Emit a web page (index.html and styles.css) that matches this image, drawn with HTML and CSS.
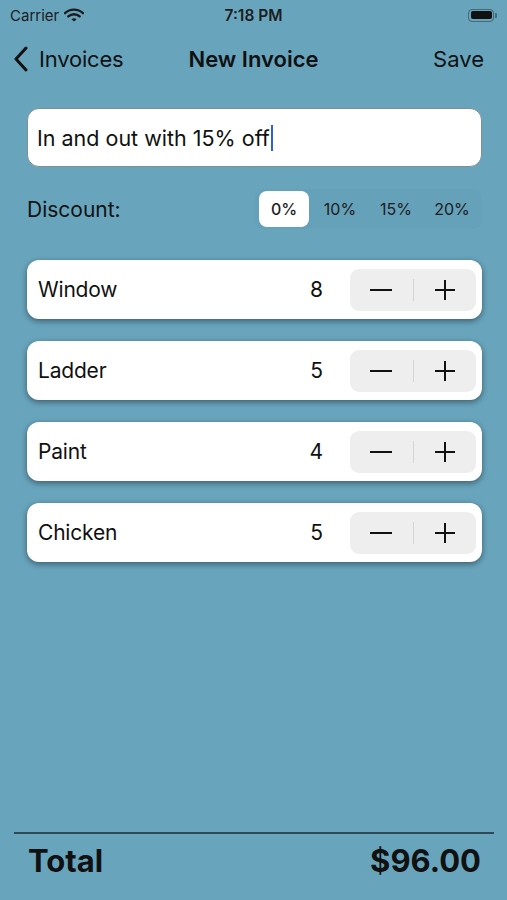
FILE: index.html
```html
<!DOCTYPE html>
<html>
<head>
<meta charset="utf-8">
<link rel="stylesheet" href="styles.css">
</head>
<body>
<div class="screen">
  <div class="status">
    <div class="status-left">
      <span class="carrier">Carrier</span>
      <svg class="wifi" width="20" height="14" viewBox="0 0 20 14">
        <path d="M1 5.2 A13 13 0 0 1 19 5.2" fill="none" stroke="#1c1c1e" stroke-width="2.4" stroke-linecap="round"/>
        <path d="M4.3 8.4 A8.5 8.5 0 0 1 15.7 8.4" fill="none" stroke="#1c1c1e" stroke-width="2.4" stroke-linecap="round"/>
        <path d="M7.4 11.3 L10 13.6 L12.6 11.3 A4 4 0 0 0 7.4 11.3 Z" fill="#1c1c1e"/>
      </svg>
    </div>
    <div class="time">7:18 PM</div>
    <div class="status-right">
      <div class="battery"><div class="battery-fill"></div></div>
      <div class="battery-cap"></div>
    </div>
  </div>

  <div class="nav">
    <div class="nav-back">
      <svg width="16" height="26" viewBox="0 0 16 26">
        <path d="M13 2 L3 13 L13 24" fill="none" stroke="#111" stroke-width="3" stroke-linecap="round" stroke-linejoin="round"/>
      </svg>
      <span>Invoices</span>
    </div>
    <div class="nav-title">New Invoice</div>
    <div class="nav-save">Save</div>
  </div>

  <div class="content">
    <div class="field"><span>In and out with 15% off</span><span class="caret"></span></div>

    <div class="discount">
      <span class="discount-label">Discount:</span>
      <div class="segmented">
        <div class="seg selected">0%</div>
        <div class="seg">10%</div>
        <div class="seg">15%</div>
        <div class="seg">20%</div>
      </div>
    </div>

    <div class="items">
      <div class="card">
        <span class="name">Window</span>
        <span class="qty">8</span>
        <div class="stepper">
          <div class="step"><svg width="24" height="24" viewBox="0 0 24 24"><path d="M1 12 H23" stroke="#111" stroke-width="2"/></svg></div>
          <div class="sep"></div>
          <div class="step"><svg width="24" height="24" viewBox="0 0 24 24"><path d="M2 12 H22 M12 2 V22" stroke="#111" stroke-width="2"/></svg></div>
        </div>
      </div>
      <div class="card">
        <span class="name">Ladder</span>
        <span class="qty">5</span>
        <div class="stepper">
          <div class="step"><svg width="24" height="24" viewBox="0 0 24 24"><path d="M1 12 H23" stroke="#111" stroke-width="2"/></svg></div>
          <div class="sep"></div>
          <div class="step"><svg width="24" height="24" viewBox="0 0 24 24"><path d="M2 12 H22 M12 2 V22" stroke="#111" stroke-width="2"/></svg></div>
        </div>
      </div>
      <div class="card">
        <span class="name">Paint</span>
        <span class="qty">4</span>
        <div class="stepper">
          <div class="step"><svg width="24" height="24" viewBox="0 0 24 24"><path d="M1 12 H23" stroke="#111" stroke-width="2"/></svg></div>
          <div class="sep"></div>
          <div class="step"><svg width="24" height="24" viewBox="0 0 24 24"><path d="M2 12 H22 M12 2 V22" stroke="#111" stroke-width="2"/></svg></div>
        </div>
      </div>
      <div class="card">
        <span class="name">Chicken</span>
        <span class="qty">5</span>
        <div class="stepper">
          <div class="step"><svg width="24" height="24" viewBox="0 0 24 24"><path d="M1 12 H23" stroke="#111" stroke-width="2"/></svg></div>
          <div class="sep"></div>
          <div class="step"><svg width="24" height="24" viewBox="0 0 24 24"><path d="M2 12 H22 M12 2 V22" stroke="#111" stroke-width="2"/></svg></div>
        </div>
      </div>
    </div>
  </div>

  <div class="footer">
    <div class="rule"></div>
    <div class="total">
      <span>Total</span>
      <span>$96.00</span>
    </div>
  </div>
</div>
</body>
</html>
```
FILE: styles.css
```css
* { box-sizing: border-box; }
html, body { margin: 0; padding: 0; }
body {
  background: #68a5bd;
  font-family: Inter, "Noto Sans", "Liberation Sans", sans-serif;
  color: #111;
}
.screen {
  width: 507px;
  height: 900px;
  display: flex;
  flex-direction: column;
}
.status {
  height: 30px;
  display: flex;
  align-items: center;
  justify-content: space-between;
  padding: 0 10px 0 10px;
  font-size: 15px;
  color: #1c1c1e;
}
.status-left { display: flex; align-items: center; gap: 5px; width: 120px; }
.carrier { font-weight: 400; }
.time { font-weight: 600; font-size: 15.5px; }
.status-right { width: 120px; display: flex; justify-content: flex-end; align-items: center; }
.battery {
  width: 26px; height: 13px;
  border: 1.5px solid rgba(30,30,30,0.45);
  border-radius: 4px;
  padding: 1.5px;
}
.battery-fill { width: 100%; height: 100%; background: #111; border-radius: 2px; }
.battery-cap { width: 2px; height: 5px; background: rgba(30,30,30,0.45); border-radius: 0 1px 1px 0; margin-left: 1px; }

.nav {
  height: 58px;
  display: flex;
  align-items: center;
  justify-content: space-between;
  padding: 0 23px 0 13px;
  font-size: 22px;
  position: relative;
}
.nav-back { display: flex; align-items: center; gap: 10px; }
.nav-back span { letter-spacing: -0.2px; }
.nav-title {
  position: absolute;
  left: 0; right: 0;
  text-align: center;
  font-weight: 600;
  pointer-events: none;
}
.content {
  flex: 1;
  padding: 20px 25px 0 27px;
}
.field {
  height: 59px;
  background: #fff;
  border: 1px solid #7d8f97;
  border-radius: 12px;
  display: flex;
  align-items: center;
  padding: 0 9px;
  font-size: 21.5px;
  letter-spacing: 0;
}
.caret {
  display: inline-block;
  width: 2px;
  height: 26px;
  background: #2f5ce0;
  margin-left: 1px;
}
.discount {
  display: flex;
  align-items: center;
  justify-content: space-between;
  margin-top: 22px;
  font-size: 21px;
}
.segmented {
  display: flex;
  width: 228px;
  height: 40px;
  background: rgba(0,0,0,0.025);
  border-radius: 9px;
  padding: 2px;
}
.seg {
  flex: 1 1 0;
  display: flex;
  align-items: center;
  justify-content: center;
  font-size: 16px;
  font-weight: 400;
  color: #1c1c1e;
  border-radius: 8px;
}
.seg.selected {
  background: #fff;
  font-weight: 500;
  box-shadow: 0 0 0 -3px transparent, 0 1px 3px rgba(0,0,0,0.15);
  clip-path: inset(0 3px round 8px);
}
.items {
  margin-top: 31px;
  display: flex;
  flex-direction: column;
  gap: 22px;
}
.card {
  height: 59px;
  background: #fff;
  border-radius: 12px;
  box-shadow: 0 2px 6px rgba(0,0,0,0.45);
  display: flex;
  align-items: center;
  padding: 0 6px 0 11px;
  font-size: 21px;
}
.name { flex: 1; letter-spacing: -0.2px; }
.qty { margin-right: 27px; }
.stepper {
  width: 126px;
  height: 42px;
  background: #eeeeef;
  border-radius: 9px;
  display: flex;
  align-items: center;
}
.step {
  flex: 1;
  display: flex;
  align-items: center;
  justify-content: center;
}
.step svg { display: block; }
.sep { width: 1px; height: 22px; background: #d4d4d6; }
.footer {
  padding: 0 13px 0 14px;
  height: 68px;
}
.rule { height: 2px; background: #2e4a56; }
.total {
  display: flex;
  justify-content: space-between;
  align-items: center;
  padding: 0 13px 0 14px;
  height: 52px;
  font-size: 31px;
  font-weight: 700;
}
```
